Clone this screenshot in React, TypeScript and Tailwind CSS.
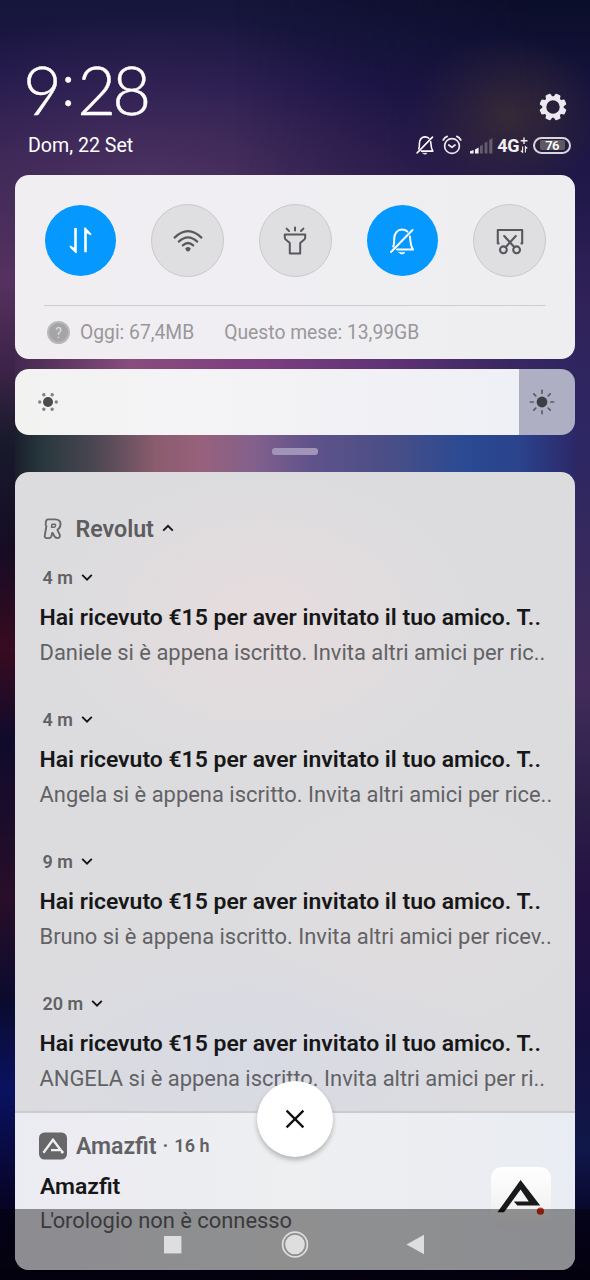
import React from "react";

type Notice = { age: string; title: string; body: string; last?: boolean };

const TITLE = "Hai ricevuto €15 per aver invitato il tuo amico. T..";

const notices: Notice[] = [
  { age: "4 m", title: TITLE, body: "Daniele si è appena iscritto. Invita altri amici per ric.." },
  { age: "4 m", title: TITLE, body: "Angela si è appena iscritto. Invita altri amici per rice.." },
  { age: "9 m", title: TITLE, body: "Bruno si è appena iscritto. Invita altri amici per ricev.." },
  { age: "20 m", title: TITLE, body: "ANGELA si è appena iscritto. Invita altri amici per ri..", last: true },
];

function Gear() {
  return (
    <svg width="28" height="28" viewBox="-14 -14 28 28">
      <g fill="#ebe8ef">
        {[0, 45, 90, 135, 180, 225, 270, 315].map((a) => (
          <path key={a} d="M-3.8 -8 L-2.8 -12.7 Q-2.6 -13.5 -1.8 -13.5 H1.8 Q2.6 -13.5 2.8 -12.7 L3.8 -8Z" transform={`rotate(${a + 22.5})`} />
        ))}
      </g>
      <circle r="8.7" fill="none" stroke="#ebe8ef" strokeWidth="4" />
    </svg>
  );
}

function BellOff({ size, width }: { size: number; width: number }) {
  return (
    <svg width={size} height={size} viewBox="0 0 28 28" fill="none" stroke="#fff" strokeWidth={width} strokeLinecap="round" strokeLinejoin="round">
      <path d="M5.2 19.5 C6.3 17.5 6.2 15 6.2 11.5 C6.2 6.2 9.6 2.6 14 2.6 C16.2 2.6 18 3.3 19.4 4.6" />
      <path d="M22 9.5 C22.4 14.5 22.3 18.5 25 22.6 H9" />
      <path d="M24.5 3 L3 25" />
      <path d="M11 25.4 H17 Q16 27 14 27 Q12 27 11 25.4Z" fill="#fff" strokeWidth="0.6" />
    </svg>
  );
}

function Alarm() {
  return (
    <svg width="20" height="20" viewBox="0 0 20 20" fill="none" stroke="#ece9f0" strokeWidth="1.7" strokeLinecap="round" strokeLinejoin="round">
      <circle cx="10" cy="11" r="7.4" />
      <path d="M6.8 10 L10 12.4 L13 10" />
      <path d="M1.2 5 Q2.6 2.4 5.2 1.4" />
      <path d="M18.8 5 Q17.4 2.4 14.8 1.4" />
    </svg>
  );
}

function Signal() {
  return (
    <svg width="23" height="17" viewBox="0 0 23 17">
      <path d="M0 14.2 L3.6 13 V16.5 H0Z" fill="#f1eef4" />
      <path d="M5 12.4 L8.6 10.6 V16.5 H5Z" fill="#f1eef4" />
      <path d="M10 9 L12.8 7.6 V16.5 H10Z M14.6 6 L17.4 4.4 V16.5 H14.6Z M19.2 3 L22.4 1 V16.5 H19.2Z" fill="#655c6c" />
    </svg>
  );
}

function NetPlus() {
  return (
    <svg width="8" height="17" viewBox="0 0 8 17" fill="none" stroke="#f1eef4" strokeWidth="1.4">
      <path d="M4 0.5 V7 M0.7 3.8 H7.5" />
      <path d="M2.6 9.5 V15.3 L0.7 13.6 M5.4 15.6 V9.8 L7.3 11.5" strokeWidth="1.1" />
    </svg>
  );
}

function DataArrows() {
  return (
    <svg width="24" height="28" viewBox="0 0 24 28" fill="#fff">
      <path d="M5.2 1 H7.8 V26 H6.6 L0.8 20.4 V18.2 L5.2 20.8Z" />
      <path d="M15.2 25.2 V0.6 H16.4 L22.2 6.4 V8.6 L17.8 6.2 V25.2Z" />
    </svg>
  );
}

function Wifi() {
  return (
    <svg width="32" height="26" viewBox="0 0 32 26" fill="none" stroke="#58585c" strokeWidth="2.2" strokeLinecap="round">
      <path d="M2.6 9.6 Q16 -3.2 29.4 9.6" />
      <path d="M6.8 13.6 Q16 5 25.2 13.6" />
      <path d="M10.8 17.4 Q16 12.6 21.2 17.4" />
      <path d="M13.2 20.4 Q16 17.6 18.8 20.4 Q18.2 22.6 16 23.8 Q13.8 22.6 13.2 20.4Z" fill="#58585c" stroke="none" />
    </svg>
  );
}

function Torch() {
  return (
    <svg width="24" height="30" viewBox="0 0 24 30" fill="none" stroke="#58585c" strokeWidth="2" strokeLinecap="round" strokeLinejoin="round">
      <path d="M1.8 8.4 H22.2 V11.4 Q22.2 12.9 21 13.8 L17.2 17 V27.6 H6.8 V17 L3 13.8 Q1.8 12.9 1.8 11.4Z" />
      <path d="M12 1.4 V4.6 M3.6 2.6 L6 5 M20.4 2.6 L18 5" />
    </svg>
  );
}

function Screenshot() {
  return (
    <svg width="28" height="28" viewBox="0 0 28 28" fill="none" stroke="#58585c" strokeWidth="2.1" strokeLinecap="round" strokeLinejoin="round">
      <path d="M2.6 16.4 H1.8 V3 H26.2 V16.4 H25.4" />
      <path d="M8.2 9 L18.4 20.2 M19.8 9 L9.6 20.2" />
      <circle cx="7.4" cy="22.8" r="3.4" />
      <circle cx="20.6" cy="22.8" r="3.4" />
    </svg>
  );
}

function Chevron({ up }: { up?: boolean }) {
  return (
    <svg width="12" height="8" viewBox="0 0 12 8" fill="none" stroke="#151515" strokeWidth="1.9">
      <path d={up ? "M1.2 6.6 L6 1.8 L10.8 6.6" : "M1.2 1.8 L6 6.6 L10.8 1.8"} />
    </svg>
  );
}

function SunLow() {
  return (
    <svg width="20" height="20" viewBox="-10 -10 20 20">
      <circle r="5" fill="#4c4c4e" />
      {[0, 60, 120, 180, 240, 300].map((a) => (
        <circle key={a} cx="8.3" cy="0" r="1.7" fill="#828284" transform={`rotate(${a})`} />
      ))}
    </svg>
  );
}

function SunHigh() {
  return (
    <svg width="26" height="26" viewBox="-13 -13 26 26">
      <circle r="5.4" fill="#3e3e46" />
      <g stroke="#5c5c68" strokeWidth="1.7" strokeLinecap="round">
        {[0, 45, 90, 135, 180, 225, 270, 315].map((a) => (
          <path key={a} d="M8.8 0 H11.6" transform={`rotate(${a})`} />
        ))}
      </g>
    </svg>
  );
}

function RevolutMark() {
  return (
    <svg width="20" height="22" viewBox="0 0 20 22" fill="none" stroke="#69696b" strokeWidth="1.9" strokeLinejoin="round">
      <path d="M5 1.4 H12 Q18 1.6 17.5 6.6 Q17.1 10.2 14.4 11.8 L16.9 17.2 Q17.2 20 14.4 20 Q12.4 20 11.4 18.2 L9.7 15 Q9.2 14.6 9 15.8 L8.4 18.2 Q7.8 20.2 5.4 20.1 H3.4 Q1.4 19.8 1.8 17.4 L3.4 8 Q2.2 7.2 2.8 4.2 Q3.2 1.6 5 1.4Z" />
      <path d="M9 6.2 H11.6 Q12.8 6.4 12.5 7.8 Q12.2 9.2 10.8 9.2 H8.5Z" strokeWidth="1.5" />
    </svg>
  );
}

function AmazfitBadge() {
  return (
    <svg width="28" height="28" viewBox="0 0 28 28">
      <rect y="0.5" width="28" height="27" rx="5.5" fill="#676769" />
      <path d="M4.4 20.8 L14 7.8 L21.8 18.2 H12" fill="none" stroke="#f1f1f4" strokeWidth="2.3" />
      <circle cx="23.2" cy="20" r="1.6" fill="#f1f1f4" />
    </svg>
  );
}

function AmazfitLogo() {
  return (
    <svg width="60" height="60" viewBox="0 0 60 60">
      <path d="M6.4 45.3 L29.6 13 L49.2 38.6 H26.4 L22.8 34.4 H37.8 L29.6 22.6 L13 45.3Z" fill="#17191b" />
      <circle cx="49.4" cy="44.2" r="3.6" fill="#d5331c" />
    </svg>
  );
}

function Toggle({ on, children }: { on?: boolean; children: React.ReactNode }) {
  return (
    <div
      className={
        on
          ? "mx-px flex size-[71px] items-center justify-center rounded-full bg-[#0598fe]"
          : "flex size-[73px] items-center justify-center rounded-full border border-[#c9c8cc] bg-[#dfdee1]"
      }
    >
      {children}
    </div>
  );
}

function NoticeRow({ age, title, body, last }: Notice) {
  return (
    <article className={last ? "h-[128px]" : "h-[142px]"}>
      <div className="flex h-[39px] items-center gap-[8px] pb-px pl-[3px] text-[18px] font-semibold text-[#626264]">
        <span>{age}</span>
        <Chevron />
      </div>
      <h3 className="h-10 text-[22.95px] leading-[41px] font-semibold whitespace-nowrap text-[#171718]">{title}</h3>
      <p className="h-[30px] text-[21.93px] leading-[31px] whitespace-nowrap text-[#626265]">{body}</p>
    </article>
  );
}

export default function App() {
  return (
    <main className="relative flex h-[1280px] w-[590px] flex-col overflow-hidden bg-[radial-gradient(310px_170px_at_150px_180px,rgba(82,56,104,0.7),transparent),linear-gradient(180deg,#15153a_0px,#20174a_90px,#3a2350_180px,#56305f_280px,#3c2348_370px,#191a2c_440px,#150c24_550px,#380b20_650px,#100b2b_740px,#280e29_900px,#0a0b2e_1000px,#0a1260_1090px,#080428_1200px,#070318_1280px)] px-[15px] font-[Roboto,sans-serif]">
      <div className="absolute top-0 right-0 h-full w-[60%] bg-[radial-gradient(100px_80px_at_270px_115px,rgba(72,56,46,0.65),transparent),linear-gradient(180deg,#0a0e28_0px,#16123e_90px,#22194b_200px,#302259_300px,#2d2764_450px,#3b2a5b_600px,#432c5b_680px,#2b1f48_800px,#241143_900px,#161040_1040px,#0f1749_1150px,#080424_1230px,#070318_1280px)] [mask-image:linear-gradient(90deg,transparent,#000_85%)]" />

      <header className="relative flex h-[175px] shrink-0 items-end justify-between pr-[4px] pb-[16px] pl-[13px] text-white">
        <div>
          <div className="-ml-[5px] flex h-[82px] font-[Lato] text-[67px] leading-[76px] font-light [-webkit-text-stroke:0.4px_#fff]">
            <span>9</span>
            <span className="-mt-[6px] -ml-[1px] text-[60px]">:</span>
            <span className="ml-[2px] tracking-[-4px]">28</span>
          </div>
          <div className="h-[26px] text-[19.6px] leading-[26px]">Dom, 22 Set</div>
        </div>
        <div className="flex flex-col items-end gap-[11px] pb-px">
          <div className="pr-[4px]"><Gear /></div>
          <div className="flex h-[26px] items-center">
            <BellOff size={20} width={2.2} />
            <div className="ml-[7px]"><Alarm /></div>
            <div className="ml-[8px]"><Signal /></div>
            <span className="ml-[4px] text-[18px] font-bold tracking-[-0.4px] text-[#f1eef4]">4G</span>
            <div className="ml-px"><NetPlus /></div>
            <div className="ml-[5px] flex h-[17px] w-[38px] items-center justify-center rounded-full border-2 border-[#dad6de] p-[1.5px]">
              <span className="flex h-full w-[25px] items-center justify-center rounded-[2px] bg-[#5d5862] text-[13px] leading-none font-semibold tracking-[-0.8px]">76</span>
            </div>
          </div>
        </div>
      </header>

      <section className="relative z-10 h-[184px] shrink-0 rounded-[14px] bg-[linear-gradient(90deg,#f1eef2,#eeeef1)] px-[29px] pt-[29px]">
        <div className="flex items-center justify-between">
          <Toggle on><DataArrows /></Toggle>
          <Toggle><Wifi /></Toggle>
          <Toggle><Torch /></Toggle>
          <Toggle on><BellOff size={28} width={2} /></Toggle>
          <Toggle><Screenshot /></Toggle>
        </div>
        <div className="mt-[28px] flex h-[55px] items-center border-t border-[#cfcdd1] text-[19.3px] text-[#99979b]">
          <span className="mb-px ml-[3px] flex size-[23px] items-center justify-center rounded-full border-2 border-[#b9b8ba] bg-[#a5a4a6] text-[14px] leading-none text-[#dedddf]">?</span>
          <span className="ml-[10px]">Oggi: 67,4MB</span>
          <span className="ml-[30px]">Questo mese: 13,99GB</span>
        </div>
      </section>

      <div className="relative -my-[14px] h-[38px] shrink-0 bg-[linear-gradient(90deg,#42284e,#884d7d_115px,#7c3f80_245px,#5c3274_385px,#392762_495px,#2f2560)]" />

      <section className="relative z-10 flex h-[66px] shrink-0 overflow-hidden rounded-[14px]">
        <div className="flex w-[504px] items-center bg-[linear-gradient(90deg,#f2f2f1,#f4f3f5_30%,#eff0f5)] pl-[23px]"><SunLow /></div>
        <div className="flex flex-1 items-center bg-[#afafc4] pl-[10px]"><SunHigh /></div>
      </section>

      <div className="relative -my-[14px] flex h-[65px] shrink-0 justify-center bg-[linear-gradient(90deg,#1a1e2b,#26363c_25px,#4b4752_80px,#8a5c6d_140px,#98617c_185px,#82618c_240px,#60528b_295px,#4a4e86_375px,#2a4a93_450px,#2a438c_505px,#2c2868)] pt-[27px]">
        <div className="h-[7px] w-[46px] rounded-[3px] bg-[#a294b9]" />
      </div>

      <section className="relative z-10 h-[798px] shrink-0 overflow-hidden rounded-[14px] bg-[#dcdcdf]">
        <div className="h-[641px] border-b-2 border-[#cbcbcf] bg-[radial-gradient(210px_150px_at_250px_150px,#e6dcdd,transparent),radial-gradient(180px_120px_at_400px_440px,#e0dcdd,transparent),radial-gradient(260px_120px_at_230px_590px,#d8dae4,transparent)] pt-[28px] pl-[24.5px]">
          <div className="flex h-[58px] items-center pl-[3px] text-[23.2px] font-semibold text-[#5d5d5f]">
            <span className="mb-px flex"><RevolutMark /></span>
            <span className="ml-[13px]">Revolut</span>
            <span className="mb-[2px] ml-[8px] flex"><Chevron up /></span>
          </div>
          {notices.map((n, i) => (
            <NoticeRow key={i} {...n} />
          ))}
        </div>
        <article className="flex h-[157px] justify-between bg-[linear-gradient(90deg,#ebebf2,#eeeff1_50%,#e9ecf2)] pr-[24px] pl-[24px]">
          <div>
            <div className="mt-[13px] flex h-10 items-center text-[23px] leading-10 font-semibold text-[#626265]">
              <span className="mb-px flex"><AmazfitBadge /></span>
              <span className="mt-px ml-[9px]">Amazfit</span>
              <span className="ml-[6px] text-[20px]">·</span>
              <span className="ml-[6px] text-[18px]">16 h</span>
            </div>
            <h3 className="h-10 pl-px text-[22.95px] leading-[41px] font-semibold text-[#171718]">Amazfit</h3>
            <p className="h-[30px] pl-px text-[21.9px] leading-[30px] text-[#626265]"><span className="tracking-[-1.5px]">L'</span>orologio non è connesso</p>
          </div>
          <div className="mt-[54px] size-[60px] rounded-[11px] bg-[linear-gradient(180deg,#fff,#f6f6f7_50%,#ebebed)]"><AmazfitLogo /></div>
        </article>
      </section>

      <nav className="absolute bottom-0 left-0 z-20 flex h-[71px] w-full items-center justify-center bg-black/40">
        <svg width="264" height="28" viewBox="0 0 264 28" fill="#dedede">
          <rect x="1" y="5" width="17.4" height="17.4" />
          <circle cx="132" cy="13.5" r="9.8" />
          <circle cx="132" cy="13.5" r="12.4" fill="none" stroke="#dedede" strokeWidth="1.7" />
          <path d="M243.5 13.5 L261 3.7 V23.3Z" />
        </svg>
      </nav>

      <button aria-label="Chiudi" className="absolute top-[1081px] left-[257px] z-20 flex size-[76px] items-center justify-center rounded-full bg-white shadow-[0_3px_5px_rgba(0,0,0,0.25)]">
        <svg width="20" height="20" viewBox="0 0 20 20" fill="none" stroke="#111" strokeWidth="2.3">
          <path d="M1.6 1.6 L18.4 18.4 M18.4 1.6 L1.6 18.4" />
        </svg>
      </button>
    </main>
  );
}
